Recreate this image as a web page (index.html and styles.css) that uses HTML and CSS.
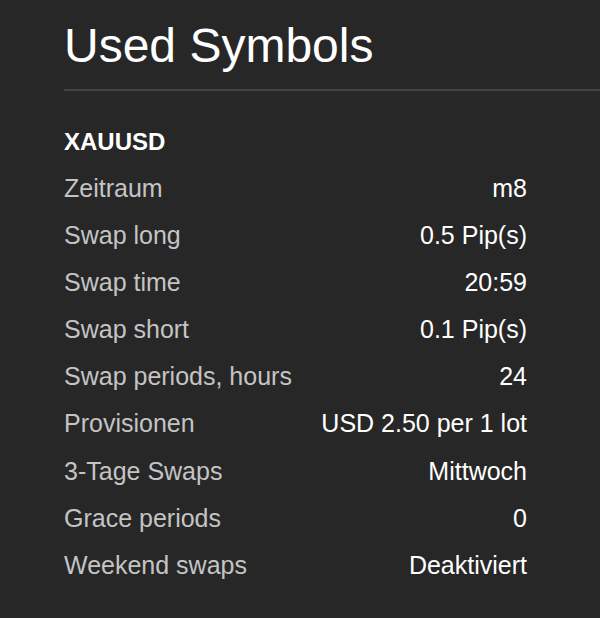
FILE: index.html
```html
<!DOCTYPE html>
<html lang="de">
	<head>
		<meta charset="UTF-8">
		<title>Used Symbols</title>
		<link rel="stylesheet" href="styles.css">
	</head>
	<body>
		<div class="panel">
			<h1 class="title">Used Symbols</h1>
			<hr class="divider">
			<div class="symbol">
				<div class="symbolName">XAUUSD</div>
				<div class="row"><span class="label">Zeitraum</span><span class="value">m8</span></div>
				<div class="row"><span class="label">Swap long</span><span class="value">0.5 Pip(s)</span></div>
				<div class="row"><span class="label">Swap time</span><span class="value">20:59</span></div>
				<div class="row"><span class="label">Swap short</span><span class="value">0.1 Pip(s)</span></div>
				<div class="row"><span class="label">Swap periods, hours</span><span class="value">24</span></div>
				<div class="row"><span class="label">Provisionen</span><span class="value">USD 2.50 per 1 lot</span></div>
				<div class="row"><span class="label">3-Tage Swaps</span><span class="value">Mittwoch</span></div>
				<div class="row"><span class="label">Grace periods</span><span class="value">0</span></div>
				<div class="row"><span class="label">Weekend swaps</span><span class="value">Deaktiviert</span></div>
			</div>
		</div>
	</body>
</html>
```

FILE: styles.css
```css
html, body {
	margin: 0;
	background-color: #272727;
}
body {
	font-family: "Liberation Sans", Arial, sans-serif;
	color: #ffffff;
}
.panel {
	padding: 22px 0 0 64px;
}
.title {
	font-size: 48px;
	font-weight: normal;
	line-height: 48px;
	margin: 0;
}
.divider {
	border: none;
	height: 2px;
	background-color: #444444;
	margin: 19px 0 0 0;
}
.symbol {
	width: 463px;
	margin-top: 27px;
}
.symbolName {
	font-size: 24px;
	font-weight: bold;
	line-height: 47px;
}
.row {
	display: flex;
	justify-content: space-between;
	font-size: 25px;
	line-height: 47.1px;
}
.label {
	color: #c4c4c4;
}
.value {
	color: #ffffff;
}
```
